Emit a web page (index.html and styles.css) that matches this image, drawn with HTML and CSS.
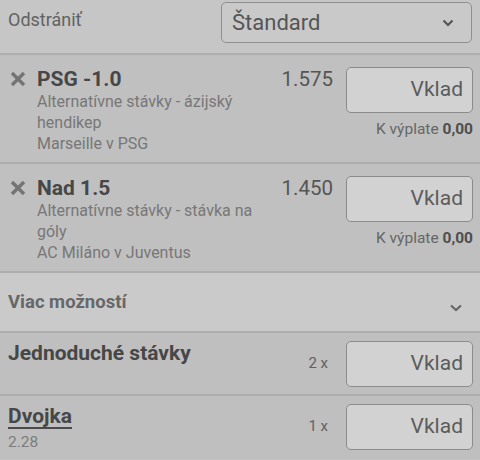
FILE: index.html
```html
<!DOCTYPE html>
<html lang="sk">

<head>
    <meta charset="UTF-8">
    <meta name="viewport" content="width=device-width, initial-scale=1.0">
    <title>Tiket</title>
    <link rel="stylesheet" href="styles.css">
</head>

<body>
    <div class="slip">
        <div class="slip-top">
            <span class="remove-all">Odstrániť</span>
            <div class="type-select">
                <span>Štandard</span>
                <svg class="chevron" width="12" height="8" viewBox="0 0 12 8">
                    <path d="M1.5 1.5 L6 6 L10.5 1.5" fill="none" stroke="#555" stroke-width="2.2" />
                </svg>
            </div>
        </div>

        <div class="bet">
            <svg class="bet-remove" width="16" height="16" viewBox="0 0 16 16">
                <path d="M2 2 L14 14 M14 2 L2 14" stroke="#747474" stroke-width="3.4" />
            </svg>
            <div class="bet-info">
                <div class="bet-title">PSG -1.0</div>
                <div class="bet-desc">Alternatívne stávky - ázijský hendikep</div>
                <div class="bet-desc">Marseille v PSG</div>
            </div>
            <div class="bet-odds">1.575</div>
            <div class="bet-stake">
                <div class="stake-input">Vklad</div>
                <div class="payout">K výplate <b>0,00</b></div>
            </div>
        </div>

        <div class="bet">
            <svg class="bet-remove" width="16" height="16" viewBox="0 0 16 16">
                <path d="M2 2 L14 14 M14 2 L2 14" stroke="#747474" stroke-width="3.4" />
            </svg>
            <div class="bet-info">
                <div class="bet-title">Nad 1.5</div>
                <div class="bet-desc">Alternatívne stávky - stávka na góly</div>
                <div class="bet-desc">AC Miláno v Juventus</div>
            </div>
            <div class="bet-odds">1.450</div>
            <div class="bet-stake">
                <div class="stake-input">Vklad</div>
                <div class="payout">K výplate <b>0,00</b></div>
            </div>
        </div>

        <div class="more">
            <span>Viac možností</span>
            <svg class="chevron" width="14" height="8" viewBox="0 0 14 8">
                <path d="M2 1.5 L7 6 L12 1.5" fill="none" stroke="#666" stroke-width="2.2" />
            </svg>
        </div>

        <div class="combo">
            <div class="combo-info">
                <div class="combo-title">Jednoduché stávky</div>
            </div>
            <div class="combo-count">2 x</div>
            <div class="stake-input">Vklad</div>
        </div>

        <div class="combo">
            <div class="combo-info">
                <div class="combo-title underlined">Dvojka</div>
                <div class="combo-odds">2.28</div>
            </div>
            <div class="combo-count">1 x</div>
            <div class="stake-input">Vklad</div>
        </div>
    </div>
</body>

</html>
```

FILE: styles.css
```css
body {
    margin: 0;
    background-color: #c4c4c4;
    font-family: Roboto, "Liberation Sans", sans-serif;
    color: #4a4a4a;
}

.slip {
    width: 480px;
    height: 460px;
    overflow: hidden;
}

.slip-top {
    display: flex;
    align-items: flex-start;
    justify-content: space-between;
    height: 55px;
    padding: 2px 8px 0 8px;
    box-sizing: border-box;
    background-color: #c6c6c6;
    border-bottom: 2px solid #afafaf;
}

.remove-all {
    font-size: 18px;
    line-height: 36px;
    color: #626262;
}

.type-select {
    display: flex;
    align-items: center;
    justify-content: space-between;
    width: 251px;
    height: 41px;
    padding: 0 17px 0 10px;
    box-sizing: border-box;
    border: 1px solid #8f8f8f;
    border-radius: 5px;
    background-color: #c9c9c9;
    font-size: 22px;
    color: #555;
}

.bet {
    display: flex;
    align-items: flex-start;
    padding: 12px 7px 8px 8px;
    background-color: #c0c0c0;
    border-bottom: 2px solid #adadad;
}

.bet-remove {
    flex: none;
    margin: 4px 11px 0 2px;
}

.bet-info {
    flex: 1;
    min-width: 0;
}

.bet-title {
    font-size: 21px;
    font-weight: bold;
    line-height: 24px;
    color: #474747;
}

.bet-desc {
    font-size: 16px;
    line-height: 21px;
    color: #777;
}

.bet-odds {
    width: 60px;
    text-align: right;
    font-size: 20.5px;
    line-height: 24px;
    color: #555;
    margin-right: 13px;
}

.bet-stake {
    display: flex;
    flex-direction: column;
    align-items: flex-end;
}

.stake-input {
    flex: none;
    width: 127px;
    height: 46px;
    box-sizing: border-box;
    padding-right: 9px;
    border: 1px solid #8b8b8b;
    border-radius: 5px;
    background-color: #d2d2d2;
    font-size: 21px;
    line-height: 42px;
    text-align: right;
    color: #5c5c5c;
}

.payout {
    margin-top: 7px;
    font-size: 15.5px;
    line-height: 18px;
    color: #666;
}

.payout b {
    color: #4e4e4e;
}

.more {
    display: flex;
    align-items: center;
    justify-content: space-between;
    height: 58px;
    padding: 0 17px 0 8px;
    background-color: #cacaca;
    border-bottom: 2px solid #adadad;
    font-size: 18.5px;
    font-weight: bold;
    color: #676767;
}

.more .chevron {
    margin-top: 12px;
}

.combo {
    display: flex;
    align-items: flex-start;
    height: 63px;
    padding: 8px 7px 0 8px;
    box-sizing: border-box;
    background-color: #bfbfbf;
    border-bottom: 2px solid #adadad;
}

.combo:last-child {
    border-bottom: none;
}

.combo-info {
    flex: 1;
}

.combo-title {
    display: inline-block;
    font-size: 21px;
    font-weight: bold;
    line-height: 24px;
    color: #474747;
}

.combo-title.underlined {
    border-bottom: 2px solid #4a4a4a;
    line-height: 22px;
    padding-top: 1px;
}

.combo-odds {
    font-size: 15.5px;
    line-height: 20px;
    margin-top: 3px;
    color: #7c7c7c;
}

.combo-count {
    margin: 13px 18px 0 0;
    font-size: 15px;
    line-height: 18px;
    color: #626262;
}
```
